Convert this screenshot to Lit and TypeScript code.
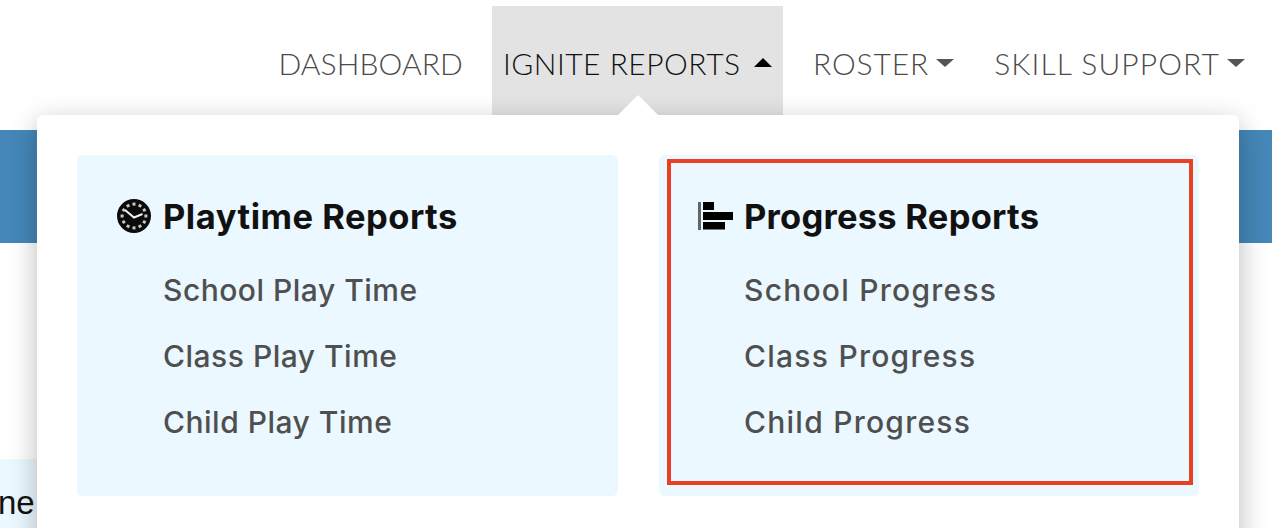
import { LitElement, html, svg, css } from "lit";
import { customElement } from "lit/decorators.js";

const clock = html`<svg class="ico" width="36" height="36" viewBox="0 0 36 36">
  <circle cx="17" cy="17" r="17" fill="#0b0b0b"/>
  ${[0, 30, 60, 90, 120, 150, 180, 210, 240, 270, 300, 330].map(
    (a) => svg`<rect x="15.5" y="3.6" width="3" height="3" fill="#c8c8c8" transform="rotate(${a} 17 17)"/>`
  )}
  <path d="M8 11 L17 18.5 L25.5 15" fill="none" stroke="#f2f2f2" stroke-width="2"/>
</svg>`;

const bars = html`<svg class="ico" width="36" height="36" viewBox="0 0 36 36">
  <rect x="0" y="3" width="3" height="28" fill="#666"/>
  <rect x="5" y="3" width="11" height="8" fill="#000"/>
  <rect x="5" y="13" width="30" height="8" fill="#000"/>
  <rect x="5" y="23" width="22" height="7.5" fill="#000"/>
</svg>`;

@customElement("app-root")
export class AppRoot extends LitElement {
  static styles = css`
    :host { display: block; position: relative; width: 1272px; height: 528px; overflow: hidden; background: #fff; font-family: "Lato", "Liberation Sans", sans-serif; }
    .nav { height: 130px; box-sizing: border-box; padding-top: 6px; display: flex; justify-content: flex-end; align-items: flex-start; padding-right: 27px; }
    .nav-item { height: 116px; box-sizing: border-box; padding-top: 39px; display: flex; align-items: flex-start; font-size: 30px; line-height: 36px; font-weight: 300; color: #4a4a4a; white-space: nowrap; letter-spacing: 0.1px; }
    .dash { margin-right: 29px; }
    .active { width: 291px; padding-left: 11px; background: #e3e3e3; color: #111; margin-right: 30px; letter-spacing: 0.5px; }
    .roster { margin-right: 40px; letter-spacing: 0.9px; }
    .skill { letter-spacing: 1.1px; }
    .caret { display: inline-block; width: 0; height: 0; border-left: 9px solid transparent; border-right: 9px solid transparent; border-top: 8px solid #555; margin: 14px 0 0 7px; }
    .caret.up { border-top: 0; border-bottom: 9px solid #000; margin: 13px 0 0 14px; }
    .band { height: 113px; background: #4587b9; }
    .strip { margin-top: 216px; height: 69px; width: 37px; background: #ebf8ff; overflow: hidden; font: 400 33px/88px "Liberation Sans", sans-serif; color: #111; text-indent: -2px; white-space: nowrap; }
    .menu { position: absolute; left: 37px; top: 115px; width: 1202px; height: 440px; box-sizing: border-box; padding: 40px; display: flex; gap: 41px; background: #fff; border-radius: 6px; box-shadow: 0 8px 28px rgba(0,0,0,0.28); }
    .pointer { position: absolute; left: 581px; top: -20px; width: 0; height: 0; border-left: 20px solid transparent; border-right: 20px solid transparent; border-bottom: 20px solid #fff; }
    .panel { width: 541px; height: 341px; box-sizing: border-box; padding: 44px 0 0 40px; background: #ebf8ff; border-radius: 6px; }
    .right { width: 540px; padding-left: 39px; }
    .title { display: flex; align-items: center; height: 36px; font: 700 34.5px/36px "Inter", sans-serif; color: #111; margin-bottom: 37px; letter-spacing: 0.5px; }
    .right .title { letter-spacing: 0.25px; }
    .ico { width: 36px; height: 36px; margin-right: 10px; flex: none; }
    .link { display: block; padding-left: 46px; font: 500 30px/36px "Inter", sans-serif; color: #4f4f4f; margin-bottom: 30px; letter-spacing: 0.5px; }
    .right .link { letter-spacing: 1.25px; }
    .mark { position: absolute; left: 630px; top: 44px; width: 526px; height: 326px; box-sizing: border-box; border: 4px solid #e83f25; pointer-events: none; }
  `;

  render() {
    return html`
      <div class="nav">
        <div class="nav-item dash">DASHBOARD</div>
        <div class="nav-item active">IGNITE REPORTS<span class="caret up"></span></div>
        <div class="nav-item roster">ROSTER<span class="caret"></span></div>
        <div class="nav-item skill">SKILL SUPPORT<span class="caret"></span></div>
      </div>
      <div class="band"></div>
      <div class="strip">ne</div>
      <div class="menu">
        <div class="pointer"></div>
        <div class="panel">
          <div class="title">${clock}Playtime Reports</div>
          <a class="link">School Play Time</a>
          <a class="link">Class Play Time</a>
          <a class="link">Child Play Time</a>
        </div>
        <div class="panel right">
          <div class="title">${bars}Progress Reports</div>
          <a class="link">School Progress</a>
          <a class="link">Class Progress</a>
          <a class="link">Child Progress</a>
        </div>
        <div class="mark"></div>
      </div>
    `;
  }
}
